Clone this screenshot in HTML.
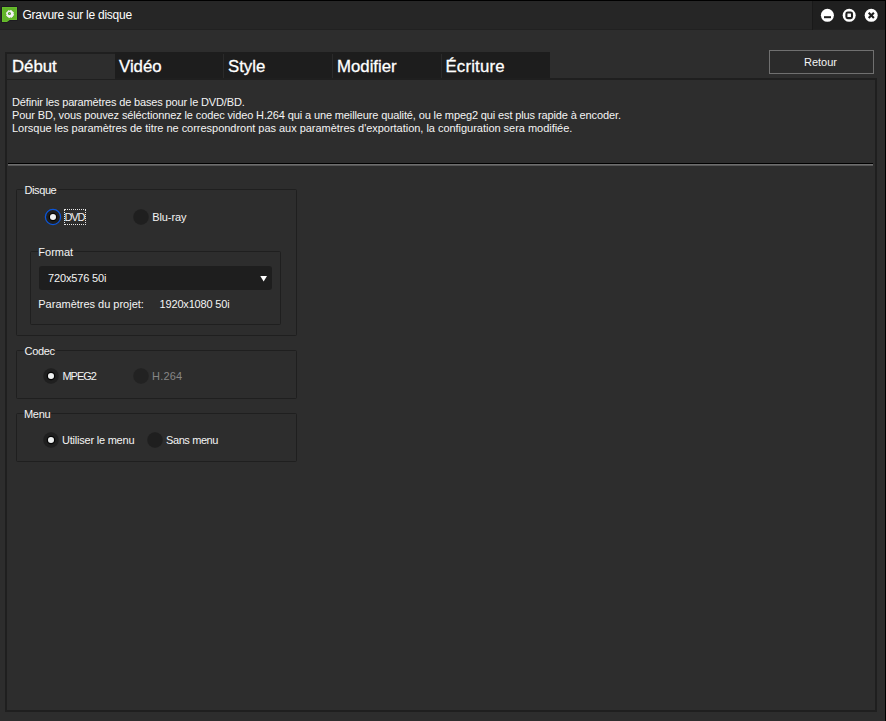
<!DOCTYPE html>
<html lang="fr">
<head>
<meta charset="utf-8">
<title>Gravure sur le disque</title>
<style>
html,body{margin:0;padding:0;}
body{width:886px;height:721px;overflow:hidden;background:#2d2d2d;font-family:"Liberation Sans",sans-serif;position:relative;color:#f2f2f2;}
.abs{position:absolute;}
.t{position:absolute;white-space:nowrap;font-size:11px;line-height:13px;color:#f4f4f4;}
#titlebar{left:0;top:0;width:886px;height:30px;background:#262626;}
#topline{left:0;top:0;width:886px;height:1px;background:#000;}
#rightline{left:885px;top:0;width:1px;height:721px;background:#000;}
#ctrl{left:812px;top:1px;width:73px;height:29px;background:#1f1f1f;}
#title{left:22.4px;top:8px;font-size:12px;line-height:14px;color:#fff;letter-spacing:-0.25px;}
#panel{left:5px;top:78px;width:868px;height:630px;border:2px solid #1f1f1f;}
.tab{position:absolute;top:52px;height:27px;width:109px;background:#1d1d1d;font-size:16.8px;line-height:18px;color:#fff;}
.tab span{position:absolute;top:6px;white-space:nowrap;-webkit-text-stroke:0.3px #fff;}
.tab.sel{background:#2d2d2d;border:2px solid #1f1f1f;border-bottom:none;border-right:none;width:108px;height:25px;left:5px;}
.sep{position:absolute;top:54px;width:1px;height:25px;background:#2a2a2a;}
#btn{left:769px;top:50px;width:103px;height:22px;border:1px solid #707070;background:#2b2b2b;}
.grp{position:absolute;border:1px solid #1f1f1f;border-radius:1.5px;}
.gl{position:absolute;background:#2d2d2d;height:10px;}
.radio{position:absolute;width:16px;height:16px;border-radius:50%;background:#1f1f1f;box-sizing:border-box;}
.radio.on::after{content:"";position:absolute;left:5px;top:5px;width:6px;height:6px;border-radius:50%;background:#f4f4f4;}
.radio.focus{border:1px solid #0b52c9;background:#1c1c1c;}
.radio.focus::after{left:4px;top:4px;}
</style>
</head>
<body>
<div id="titlebar" class="abs"></div>
<div id="ctrl" class="abs"></div>
<div class="abs" style="left:0;top:29px;width:885px;height:1px;background:#212121"></div>
<div class="abs" style="left:812px;top:1px;width:1px;height:29px;background:#191919"></div>
<div id="topline" class="abs"></div>
<div id="rightline" class="abs"></div>

<!-- app icon -->
<svg class="abs" style="left:1px;top:6px" width="18" height="18" viewBox="-1 -1 18 18">
  <path d="M0 0H15V13H7.7L5 15H0Z" fill="#63b52b" stroke="#1b1920" stroke-width="1.4" stroke-linejoin="miter"/>
  <path d="M0 0H15V13H7.7L5 15H0Z" fill="#67bd2c"/>
  <path d="M1 1H14V12H7.4L4.7 14H1Z" fill="#62b42a"/>
  <circle cx="8" cy="7" r="3.6" fill="#f4f2f6" stroke="#f4f2f6" stroke-width="1" stroke-dasharray="1.6 1.2"/>
  <circle cx="7.45" cy="6.45" r="1.5" fill="#48a01f"/>
  <circle cx="7.6" cy="6.4" r="0.45" fill="#e6f3dc"/>
</svg>
<div id="title" class="t">Gravure sur le disque</div>

<!-- window controls -->
<svg class="abs" style="left:812px;top:1px" width="73" height="29" viewBox="0 0 73 29">
  <circle cx="15.4" cy="14.3" r="6.5" fill="#fff"/>
  <rect x="12" y="15.2" width="7" height="2" fill="#1f1f1f"/>
  <circle cx="37.2" cy="14.3" r="6.5" fill="#fff"/>
  <rect x="34.4" y="11.5" width="5.6" height="5.6" rx="1.3" fill="none" stroke="#1f1f1f" stroke-width="2.1"/>
  <circle cx="59.2" cy="14.3" r="6.5" fill="#fff"/>
  <path d="M56.7 11.8L61.9 17M61.9 11.8L56.7 17" stroke="#1f1f1f" stroke-width="2.1" fill="none"/>
</svg>

<!-- tabs -->
<div class="tab" style="left:115px"><span style="left:4px">Vidéo</span></div>
<div class="tab" style="left:224px"><span style="left:4px">Style</span></div>
<div class="tab" style="left:333px"><span style="left:4px">Modifier</span></div>
<div class="tab" style="left:442px;width:108px"><span style="left:3.5px;letter-spacing:0.18px">Écriture</span></div>
<div class="sep" style="left:223px"></div>
<div class="sep" style="left:332px"></div>
<div class="sep" style="left:441px"></div>
<div id="panel" class="abs"></div>
<div class="tab sel"><span style="left:5px;top:4px">Début</span></div>

<div id="btn" class="abs"></div>
<div class="t" style="left:804px;top:56px">Retour</div>

<!-- description -->
<div class="t" style="left:12px;top:96px;letter-spacing:-0.15px">Définir les paramètres de bases pour le DVD/BD.</div>
<div class="t" style="left:12px;top:109px;letter-spacing:-0.123px">Pour BD, vous pouvez séléctionnez le codec video H.264 qui a une meilleure qualité, ou le mpeg2 qui est plus rapide à encoder.</div>
<div class="t" style="left:12px;top:122px;letter-spacing:-0.027px">Lorsque les paramètres de titre ne correspondront pas aux paramètres d'exportation, la configuration sera modifiée.</div>

<div class="abs" style="left:8px;top:163px;width:865px;height:1px;background:#000"></div>
<div class="abs" style="left:8px;top:164px;width:865px;height:1px;background:#6e6e6e"></div>
<div class="abs" style="left:8px;top:165px;width:865px;height:1px;background:#565656"></div>

<!-- Disque group -->
<div class="grp" style="left:16px;top:189px;width:279px;height:145px"></div>
<div class="gl" style="left:24px;top:185px;width:33px"></div>
<div class="t" style="left:24.5px;top:184px;letter-spacing:-0.4px">Disque</div>
<svg class="abs" style="left:44px;top:208px" width="18" height="18" viewBox="0 0 18 18"><circle cx="9" cy="9" r="7.6" fill="#1e1e1e" stroke="#0b55d8" stroke-width="1.3"/><circle cx="9" cy="9" r="4.3" fill="#050505"/><circle cx="9" cy="9" r="3.05" fill="#eef0f0"/></svg>
<div class="abs" style="left:64px;top:209px;width:20px;height:14px;border:1px dotted #e8e8e8"></div>
<div class="t" style="left:64.6px;top:211px;letter-spacing:-1.2px">DVD</div>
<svg class="abs" style="left:132px;top:208px" width="18" height="18" viewBox="0 0 18 18"><circle cx="9" cy="9" r="7.75" fill="#1f1f1f"/></svg>
<div class="t" style="left:152.3px;top:211px;letter-spacing:-0.12px">Blu-ray</div>

<!-- Format group -->
<div class="grp" style="left:30px;top:251px;width:249px;height:72px"></div>
<div class="gl" style="left:38px;top:247px;width:35px"></div>
<div class="t" style="left:38.3px;top:246px">Format</div>
<div class="abs" style="left:39px;top:266px;width:233px;height:24px;border-radius:3px;background:#1e1e1e"></div>
<div class="t" style="left:48px;top:272px;letter-spacing:-0.15px">720x576 50i</div>
<svg class="abs" style="left:260px;top:276px" width="8" height="6" viewBox="0 0 8 6"><path d="M0.3 0H7L3.65 5.6Z" fill="#fff"/></svg>
<div class="t" style="left:38.3px;top:298px;letter-spacing:-0.01px">Paramètres du projet:</div>
<div class="t" style="left:159.6px;top:298px;letter-spacing:-0.18px">1920x1080 50i</div>

<!-- Codec group -->
<div class="grp" style="left:16px;top:350px;width:279px;height:47px"></div>
<div class="gl" style="left:24px;top:346px;width:32px"></div>
<div class="t" style="left:24.5px;top:345px;letter-spacing:-0.3px">Codec</div>
<svg class="abs" style="left:42px;top:367px" width="18" height="18" viewBox="0 0 18 18"><circle cx="9" cy="9" r="7.75" fill="#1f1f1f"/><circle cx="9" cy="9" r="4.3" fill="#050505"/><circle cx="9" cy="9" r="3.05" fill="#eef0f0"/></svg>
<div class="t" style="left:62.4px;top:370px;letter-spacing:-1px">MPEG2</div>
<svg class="abs" style="left:132px;top:367px" width="18" height="18" viewBox="0 0 18 18"><circle cx="9" cy="9" r="7.75" fill="#222222"/></svg>
<div class="t" style="left:152px;top:370px;color:#868686;letter-spacing:0.2px">H.264</div>

<!-- Menu group -->
<div class="grp" style="left:16px;top:413px;width:279px;height:47px"></div>
<div class="gl" style="left:24px;top:409px;width:27px"></div>
<div class="t" style="left:24px;top:408px;letter-spacing:-0.3px">Menu</div>
<svg class="abs" style="left:42px;top:431px" width="18" height="18" viewBox="0 0 18 18"><circle cx="9" cy="9" r="7.75" fill="#1f1f1f"/><circle cx="9" cy="9" r="4.3" fill="#050505"/><circle cx="9" cy="9" r="3.05" fill="#eef0f0"/></svg>
<div class="t" style="left:62px;top:434px;letter-spacing:-0.22px">Utiliser le menu</div>
<svg class="abs" style="left:146px;top:431px" width="18" height="18" viewBox="0 0 18 18"><circle cx="9" cy="9" r="7.75" fill="#1f1f1f"/></svg>
<div class="t" style="left:166px;top:434px;letter-spacing:-0.4px">Sans menu</div>
</body>
</html>
